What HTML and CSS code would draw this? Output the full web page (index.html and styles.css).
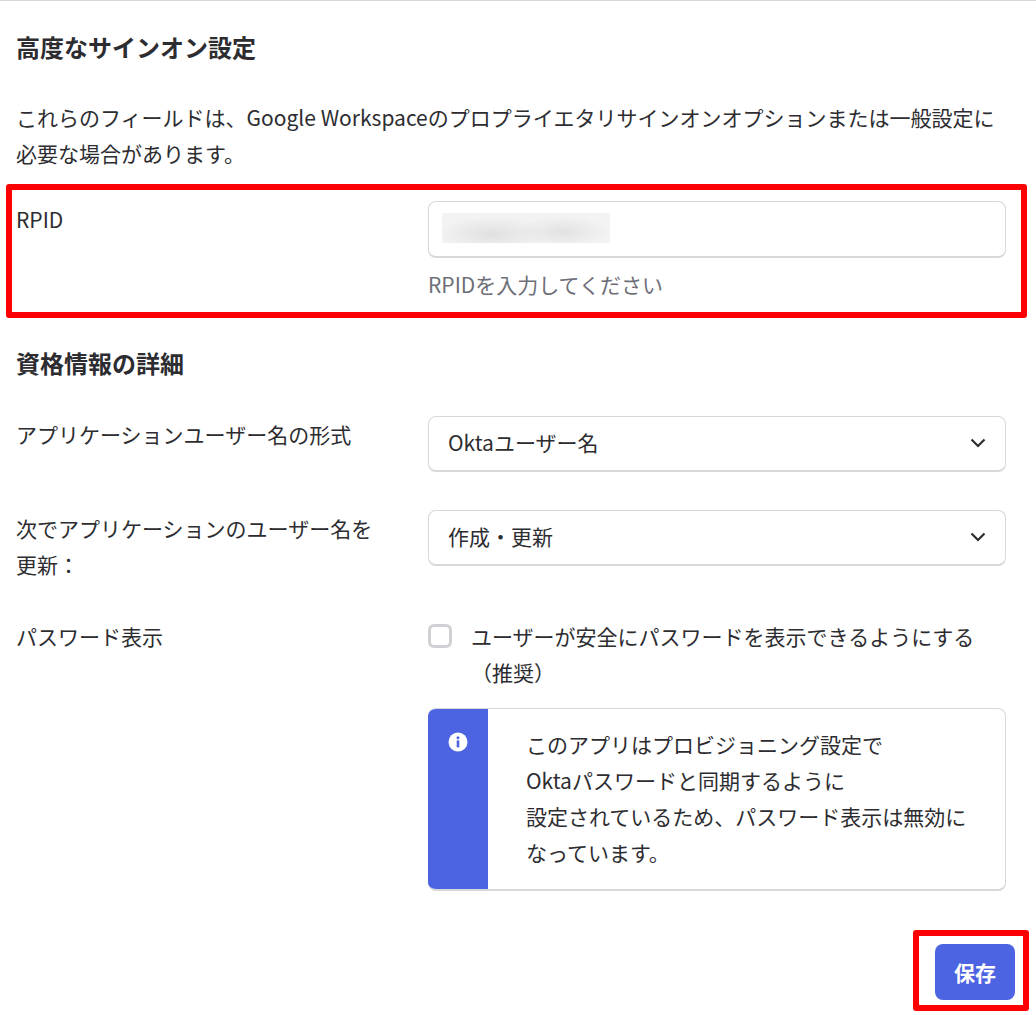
FILE: index.html
```html
<!DOCTYPE html>
<html lang="ja">
<head>
<meta charset="utf-8">
<title>高度なサインオン設定</title>
<link rel="stylesheet" href="styles.css">
</head>
<body>
	<div class="page">
		<h2 class="sectionTitle firstTitle">高度なサインオン設定</h2>
		<p class="intro">これらのフィールドは、Google Workspaceのプロプライエタリサインオンオプションまたは一般設定に必要な場合があります。</p>

		<div class="row rpidRow">
			<div class="rowLabel">RPID</div>
			<div class="rowField">
				<div class="textBox"><span class="blurred"></span></div>
				<div class="hint">RPIDを入力してください</div>
			</div>
			<div class="redBox"></div>
		</div>

		<h2 class="sectionTitle credentialsTitle">資格情報の詳細</h2>

		<div class="row formatRow">
			<div class="rowLabel">アプリケーションユーザー名の形式</div>
			<div class="rowField">
				<div class="selectBox">Oktaユーザー名
					<svg class="chevron" viewBox="0 0 16 10" width="16" height="10"><path d="M1.5 1.5 8 8l6.5-6.5" fill="none" stroke="#2d2d31" stroke-width="2.2"/></svg>
				</div>
			</div>
		</div>

		<div class="row updateRow">
			<div class="rowLabel">次でアプリケーションのユーザー名を更新：</div>
			<div class="rowField">
				<div class="selectBox">作成・更新
					<svg class="chevron" viewBox="0 0 16 10" width="16" height="10"><path d="M1.5 1.5 8 8l6.5-6.5" fill="none" stroke="#2d2d31" stroke-width="2.2"/></svg>
				</div>
			</div>
		</div>

		<div class="row passwordRow">
			<div class="rowLabel">パスワード表示</div>
			<div class="rowField">
				<div class="checkLine">
					<span class="checkBox"></span>
					<span class="checkText">ユーザーが安全にパスワードを表示できるようにする（推奨）</span>
				</div>
				<div class="infoBox">
					<div class="infoSide">
						<svg class="infoIcon" viewBox="0 0 20 20" width="20" height="20"><circle cx="10" cy="10" r="9.5" fill="#fff"/><rect x="8.7" y="8.4" width="2.6" height="7" fill="#4c64e2"/><circle cx="10" cy="5.8" r="1.5" fill="#4c64e2"/></svg>
					</div>
					<div class="infoText">このアプリはプロビジョニング設定で<br>Oktaパスワードと同期するように<br>設定されているため、パスワード表示は無効になっています。</div>
				</div>
			</div>
		</div>

		<div class="actions">
			<div class="saveWrap">
				<button class="saveButton" type="button">保存</button>
				<div class="redBox"></div>
			</div>
		</div>
	</div>
</body>
</html>
```

FILE: styles.css
```css
html, body {
	margin: 0;
	padding: 0;
	background: #fff;
}

.page {
	box-sizing: border-box;
	width: 1036px;
	height: 1015px;
	padding: 0 30px 0 16px;
	border-top: 1px solid #d7d7dc;
	color: #2d2d31;
	font-family: "Noto Sans CJK JP", "Noto Sans", sans-serif;
	font-size: 21px;
	line-height: 36px;
	overflow: hidden;
}

.sectionTitle {
	margin: 0;
	font-size: 24px;
	font-weight: 700;
	line-height: 36px;
}

.firstTitle {
	padding-top: 28px;
}

.credentialsTitle {
	margin-top: 27px;
}

.intro {
	margin: 34px 0 0;
	width: 985px;
}

.row {
	position: relative;
	display: flex;
}

.rowLabel {
	width: 412px;
	flex: none;
	padding-right: 40px;
	box-sizing: border-box;
}

.rowField {
	width: 578px;
	flex: none;
}

.rpidRow {
	margin-top: 13px;
	height: 134px;
	padding-top: 17px;
	box-sizing: border-box;
}

.textBox, .selectBox {
	position: relative;
	box-sizing: border-box;
	height: 57px;
	border: 1px solid #d7d7dc;
	border-bottom-width: 2px;
	border-radius: 8px;
	background: #fff;
}

.blurred {
	position: absolute;
	left: 13px;
	top: 11px;
	width: 168px;
	height: 30px;
	background:
		radial-gradient(ellipse 55px 18px at 30% 70%, #e0e0e0, transparent 100%),
		radial-gradient(ellipse 45px 16px at 72% 62%, #e2e2e2, transparent 100%),
		#f3f3f3;
}

.hint {
	margin-top: 8px;
	color: #6e6e78;
}

.redBox {
	position: absolute;
	box-sizing: border-box;
	border: 6px solid #ff0000;
	border-radius: 3px;
	pointer-events: none;
}

.rpidRow .redBox {
	left: -10px;
	top: 0;
	width: 1021px;
	height: 134px;
}

.formatRow {
	margin-top: 35px;
}

.updateRow {
	margin-top: 38px;
}

.passwordRow {
	margin-top: 36px;
}

.selectBox {
	display: flex;
	align-items: center;
	justify-content: space-between;
	height: 56px;
	padding: 0 19px 2px;
	line-height: 1;
}

.checkLine {
	display: flex;
}

.checkBox {
	flex: none;
	box-sizing: border-box;
	width: 24px;
	height: 24px;
	margin-top: 6px;
	border: 3px solid #d0d0d4;
	border-radius: 6px;
}

.checkText {
	margin-left: 19px;
	width: 520px;
}

.infoBox {
	display: flex;
	box-sizing: border-box;
	height: 183px;
	margin-top: 18px;
	border: 1px solid #d7d7dc;
	border-left: 0;
	border-bottom-width: 2px;
	border-radius: 8px;
	overflow: hidden;
}

.infoSide {
	flex: none;
	width: 60px;
	margin-top: -1px;
	margin-bottom: -2px;
	padding-top: 24px;
	background: #4c64e2;
	text-align: center;
	box-sizing: border-box;
}

.infoIcon {
	display: block;
	margin: 0 auto;
}

.infoText {
	padding: 17px 30px 0 38px;
}

.actions {
	display: flex;
	justify-content: flex-end;
	margin-top: 53px;
	margin-right: -9px;
}

.saveWrap {
	position: relative;
}

.saveButton {
	display: block;
	width: 80px;
	height: 56px;
	padding: 0;
	border: 0;
	border-radius: 8px;
	background: #4c64e2;
	color: #fff;
	font-family: inherit;
	font-size: 21px;
	font-weight: 700;
}

.saveWrap .redBox {
	left: -22px;
	top: -14px;
	width: 116px;
	height: 81px;
}
```
